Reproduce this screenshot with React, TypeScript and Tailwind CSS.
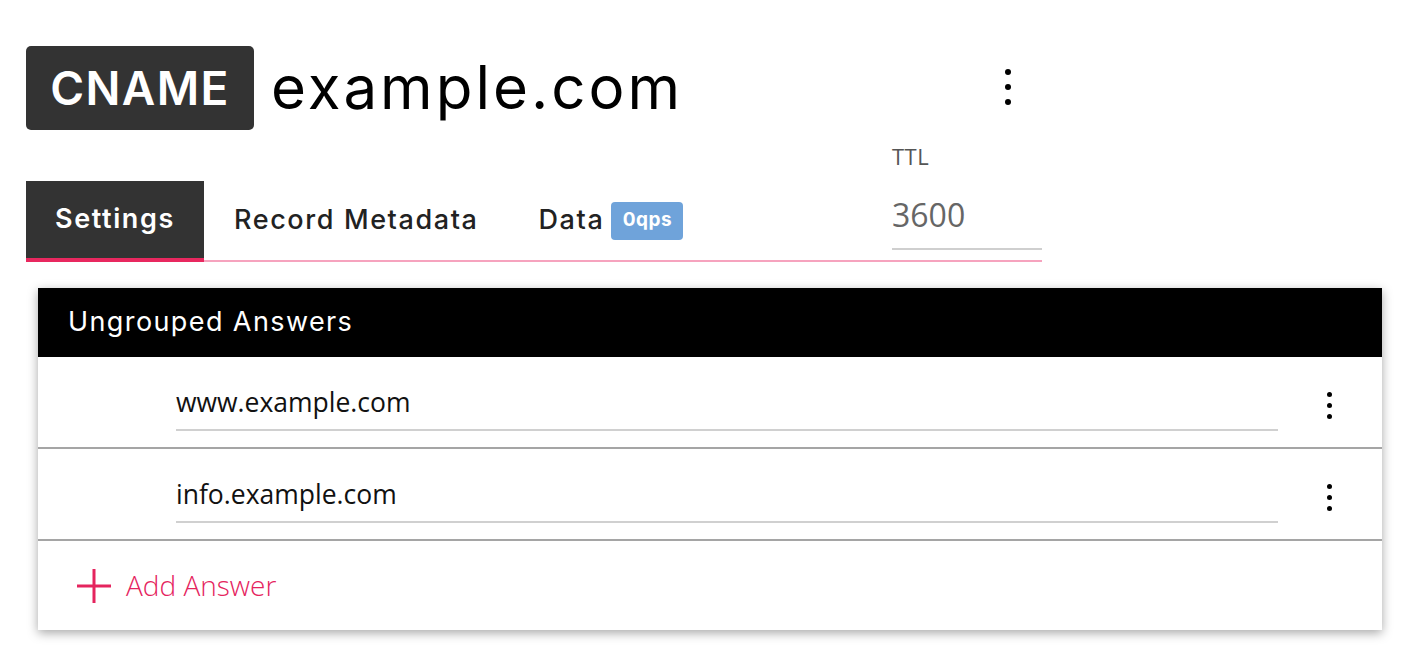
import React from "react";

const mont = { fontFamily: "Inter, 'Noto Sans', sans-serif" };

function Kebab({ size = 6, gap = 9 }: { size?: number; gap?: number }) {
  return (
    <div className="flex flex-col items-center" style={{ gap }}>
      <span className="block rounded-full bg-black" style={{ width: size, height: size }} />
      <span className="block rounded-full bg-black" style={{ width: size, height: size }} />
      <span className="block rounded-full bg-black" style={{ width: size, height: size }} />
    </div>
  );
}

function AnswerRow({ value }: { value: string }) {
  return (
    <div className="flex h-[92px] items-start border-b-2 border-[#a5a5a5]">
      <div className="ml-[138px] w-[1102px] pt-[16px]">
        <div
          className="h-[58px] border-b-2 border-[#d0d0d0] text-[26.5px] leading-[58px] text-[#111]"
          style={{ fontFamily: "'Open Sans', sans-serif" }}
        >
          {value}
        </div>
      </div>
      <div className="ml-[49px] mt-[35px]">
        <Kebab size={5} gap={6} />
      </div>
    </div>
  );
}

export default function App() {
  return (
    <div className="relative h-[646px] w-[1428px] overflow-hidden bg-white">
      {/* Header */}
      <div className="ml-[26px] mt-[46px] flex w-[1016px] items-center" style={mont}>
        <div className="flex h-[84px] w-[228px] items-center justify-center rounded-[5px] bg-[#333333] text-[46px] font-semibold tracking-[1.4px] text-white">
          CNAME
        </div>
        <div className="ml-[17px] -mt-[2px] text-[60px] font-normal leading-none tracking-[3px] text-black">
          example.com
        </div>
        <div className="flex-1" />
        <div className="mr-[31px] -mt-[2px]">
          <Kebab size={6} gap={9} />
        </div>
      </div>

      {/* Tabs + TTL */}
      <div className="ml-[26px] mt-[15px] flex w-[1016px] items-end border-b-2 border-[#f6a3be]" style={mont}>
        <div className="-mb-[2px] flex h-[81px] w-[178px] items-center justify-center border-b-4 border-[#e8285f] bg-[#333333] text-[27px] font-semibold tracking-[1.6px] text-white">
          Settings
        </div>
        <div className="flex h-[79px] items-center pl-[30px] text-[27px] font-medium tracking-[1.6px] text-[#222]">
          Record Metadata
        </div>
        <div className="flex h-[79px] items-center pl-[60px] text-[27px] font-medium tracking-[1.6px] text-[#222]">
          Data
          <span className="ml-[7px] flex h-[38px] w-[72px] items-center justify-center rounded-[4px] bg-[#6fa3da] text-[19px] font-bold tracking-[0.5px] text-white">
            0qps
          </span>
        </div>
        <div className="flex-1" />
        <div className="mb-[10px] w-[150px]" style={{ fontFamily: "'Open Sans', sans-serif" }}>
          <div className="text-[22px] leading-[22px] tracking-[0.5px] text-[#555]">TTL</div>
          <div className="mt-[23px] h-[60px] border-b-2 border-[#cfcfcf] pt-[3px] text-[32px] leading-[44px] text-[#666]">
            3600
          </div>
        </div>
      </div>

      {/* Card */}
      <div className="ml-[38px] mt-[26px] w-[1344px] bg-white shadow-[0_3px_10px_rgba(0,0,0,0.35)]">
        <div className="flex h-[69px] items-center bg-black pl-[30px] text-[27px] font-normal tracking-[1.4px] text-white" style={mont}>
          Ungrouped Answers
        </div>
        <AnswerRow value="www.example.com" />
        <AnswerRow value="info.example.com" />
        <div className="flex h-[89px] items-center pl-[38px]" style={{ fontFamily: "'Open Sans', sans-serif" }}>
          <svg width="36" height="36" viewBox="0 0 36 36">
            <path d="M18 1 V35 M1 18 H35" stroke="#e5245e" strokeWidth="3" fill="none" />
          </svg>
          <span className="ml-[14px] -mt-[2px] text-[28px] font-light text-[#e5245e]">Add Answer</span>
        </div>
      </div>
    </div>
  );
}
